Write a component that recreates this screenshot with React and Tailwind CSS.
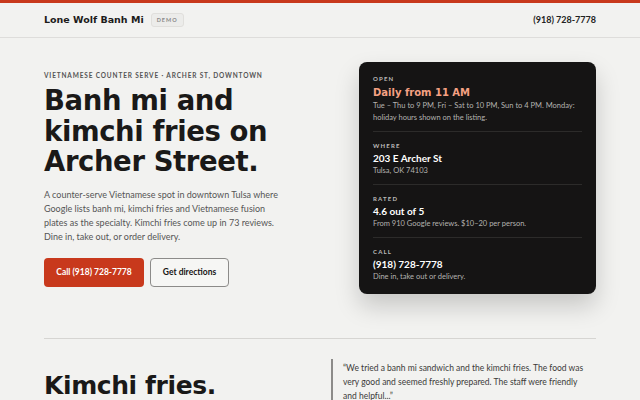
import React from 'react';

const display = { fontFamily: '"DejaVu Sans", "Inter", sans-serif' };

const facts = [
  {
    label: 'Open',
    title: 'Daily from 11 AM',
    accent: true,
    note: 'Tue – Thu to 9 PM, Fri – Sat to 10 PM, Sun to 4 PM. Monday: holiday hours shown on the listing.',
  },
  { label: 'Where', title: '203 E Archer St', note: 'Tulsa, OK 74103' },
  { label: 'Rated', title: '4.6 out of 5', note: 'From 910 Google reviews. $10–20 per person.' },
  { label: 'Call', title: '(918) 728-7778', note: 'Dine in, take out or delivery.' },
];

const App = () => (
  <div className="min-h-screen bg-[#f2f2f0] text-[#161514] overflow-hidden" style={{ fontFamily: 'Lato, "Open Sans", sans-serif' }}>
    <div className="h-[3px] bg-[#c8391c]" />
    <header className="border-b border-[#dedddb]">
      <div className="mx-[44px] h-[34px] flex items-center justify-between">
        <div className="flex items-center gap-[7px]">
          <span className="text-[9.5px] font-bold text-[#1c1b1a]" style={display}>Lone Wolf Banh Mi</span>
          <span className="text-[5.5px] font-bold tracking-[1px] text-[#888] border border-[#e0dfdc] bg-[#ececea] rounded-[3px] px-[5px] py-[2px]">DEMO</span>
        </div>
        <span className="text-[9px] font-bold text-[#222]">(918) 728-7778</span>
      </div>
    </header>

    <main className="mx-[44px]">
      <section className="flex justify-between pt-[24px] pb-[44px] border-b border-[#d6d5d2]">
        <div className="w-[260px] pt-[9px]">
          <p className="text-[6.5px] leading-[9px] font-bold tracking-[0.85px] text-[#555] uppercase">Vietnamese counter serve · Archer St, Downtown</p>
          <h1 className="mt-[5px] w-[240px] text-[27.5px] leading-[30.5px] font-bold tracking-[-0.4px] text-[#1a1918]" style={display}>
            Banh mi and kimchi fries on Archer Street.
          </h1>
          <p className="mt-[11px] text-[9px] leading-[14px] text-[#555] w-[235px]">
            A counter-serve Vietnamese spot in downtown Tulsa where Google lists banh mi, kimchi fries and Vietnamese fusion plates as the specialty. Kimchi fries come up in 73 reviews. Dine in, take out, or order delivery.
          </p>
          <div className="mt-[14px] flex gap-[6px]">
            <button className="h-[29px] w-[100px] rounded-[4px] bg-[#c8391c] text-white text-[8.5px] font-bold">Call (918) 728-7778</button>
            <button className="h-[29px] w-[79px] rounded-[4px] border border-[#8c8b89] bg-[#f6f6f4] text-[#161514] text-[8.5px] font-bold">Get directions</button>
          </div>
        </div>

        <div className="w-[237px] h-[232px] shrink-0 rounded-[8px] bg-[#151414] px-[14px] pt-[12px] shadow-[0_12px_24px_rgba(0,0,0,0.18)]">
          {facts.map((f, i) => (
            <div key={f.label} className={i ? 'border-t border-[#2c2b2a] pt-[9px] pb-[7px]' : 'pb-[7px]'}>
              <p className="text-[6px] leading-[9px] font-bold tracking-[1.2px] uppercase text-[#bdbcba]">{f.label}</p>
              {f.accent ? (
                <p className="mt-[2px] text-[10px] leading-[15px] font-bold text-[#f4a183]" style={display}>{f.title}</p>
              ) : (
                <p className="mt-[2px] text-[10px] leading-[13px] font-bold text-white">{f.title}</p>
              )}
              <p className="text-[7.5px] leading-[12px] text-[#b4b3b0]">{f.note}</p>
            </div>
          ))}
        </div>
      </section>

      <section className="flex justify-between pt-[20px]">
        <h2 className="mt-[11px] text-[25px] leading-[32px] font-bold tracking-[-0.4px] text-[#1a1918]" style={display}>Kimchi fries.</h2>
        <blockquote className="w-[265px] border-l-2 border-[#8c8b89] pl-[10px] pr-[8px] pt-[2px] text-[8.5px] leading-[14px] text-[#3b3a39]">
          “We tried a banh mi sandwich and the kimchi fries. The food was very good and seemed freshly prepared. The staff were friendly and helpful...”
        </blockquote>
      </section>
    </main>
  </div>
);

export default App;
